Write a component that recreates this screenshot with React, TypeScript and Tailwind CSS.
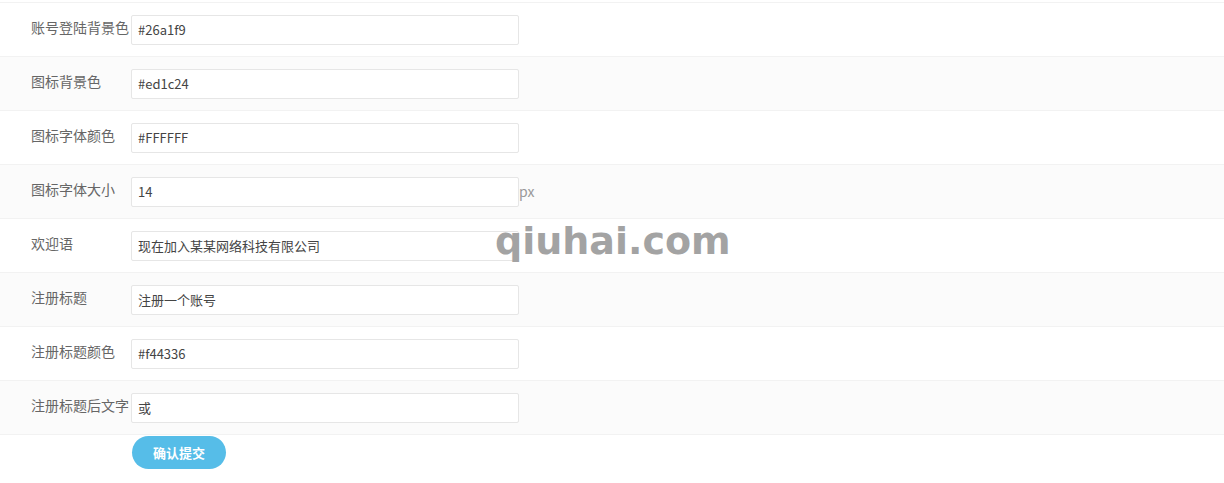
import React from "react";

const fields = [
  { label: "账号登陆背景色", value: "#26a1f9" },
  { label: "图标背景色", value: "#ed1c24" },
  { label: "图标字体颜色", value: "#FFFFFF" },
  { label: "图标字体大小", value: "14", unit: "px" },
  { label: "欢迎语", value: "现在加入某某网络科技有限公司" },
  { label: "注册标题", value: "注册一个账号" },
  { label: "注册标题颜色", value: "#f44336" },
  { label: "注册标题后文字", value: "或" },
];

export default function App() {
  return (
    <div
      className="relative w-[1224px] h-[483px] bg-white overflow-hidden"
      style={{ fontFamily: '"Noto Sans CJK SC", "Noto Sans", sans-serif' }}
    >
      <div className="pt-[2px]">
        {fields.map((f, i) => (
          <div
            key={f.label}
            className={
              "flex h-[54px] border-t border-[#f2f2f2] " +
              (i % 2 === 1 ? "bg-[#fbfbfb]" : "bg-white")
            }
          >
            <div className="w-[131px] pl-[31px] pt-[14px] text-[14px] leading-[20px] text-[#666] whitespace-nowrap">
              {f.label}
            </div>
            <div className="mt-[12px] h-[30px] w-[388px] border border-[#e6e6e6] rounded-[2px] bg-white px-[6px] text-[13px] leading-[28px] text-[#444]">
              {f.value}
            </div>
            {f.unit && (
              <div className="pt-[16px] text-[14px] leading-[20px] text-[#999]">
                {f.unit}
              </div>
            )}
          </div>
        ))}
      </div>
      <div className="border-t border-[#f2f2f2] pl-[132px] pt-[1px]">
        <button className="h-[33px] w-[94px] rounded-full bg-[#56bde8] text-white text-[13px] font-bold">
          确认提交
        </button>
      </div>
      <div
        className="absolute left-[495px] top-[213px] text-[38px] font-bold text-[#a3a3a3] leading-[56px] select-none"
        style={{ fontFamily: '"DejaVu Sans", sans-serif' }}
      >
        qiuhai.com
      </div>
    </div>
  );
}
